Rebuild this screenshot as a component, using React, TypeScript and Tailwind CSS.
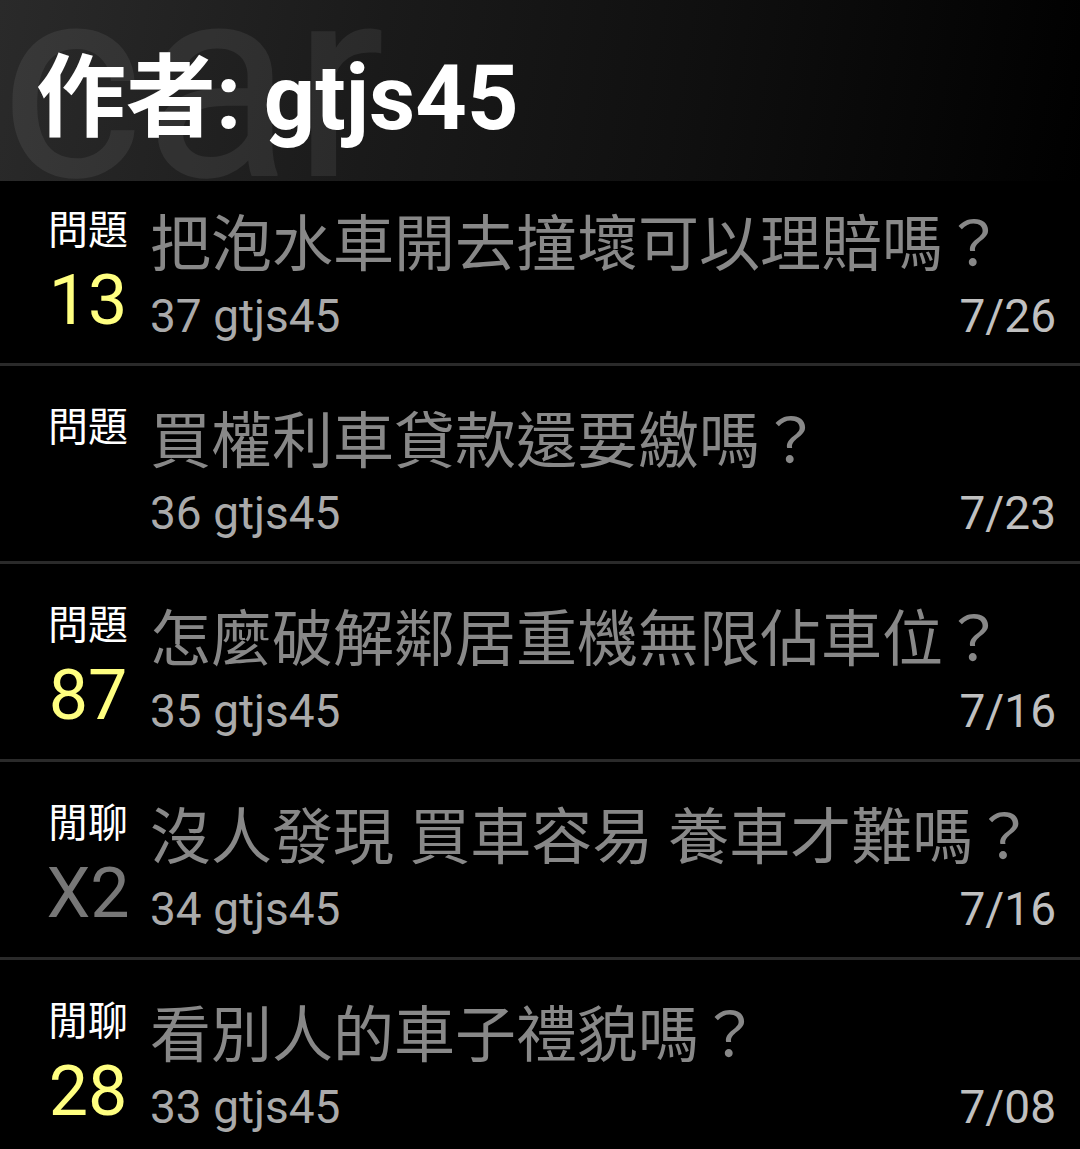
import React from "react";

type Post = {
  kind: string;
  count?: string;
  countGray?: boolean;
  title: string;
  no: string;
  author: string;
  date: string;
};

const POSTS: Post[] = [
  { kind: "問題", count: "13", title: "把泡水車開去撞壞可以理賠嗎？", no: "37", author: "gtjs45", date: "7/26" },
  { kind: "問題", title: "買權利車貸款還要繳嗎？", no: "36", author: "gtjs45", date: "7/23" },
  { kind: "問題", count: "87", title: "怎麼破解鄰居重機無限佔車位？", no: "35", author: "gtjs45", date: "7/16" },
  { kind: "閒聊", count: "X2", countGray: true, title: "沒人發現 買車容易 養車才難嗎？", no: "34", author: "gtjs45", date: "7/16" },
  { kind: "閒聊", count: "28", title: "看別人的車子禮貌嗎？", no: "33", author: "gtjs45", date: "7/08" },
];

const FONT = "font-['Roboto','Noto_Sans_CJK_TC',sans-serif]";

export default function App() {
  return (
    <div lang="zh-Hant" className={`w-[1080px] h-[1149px] bg-black overflow-hidden ${FONT}`}>
      {/* Header */}
      <div className="relative h-[181px] overflow-hidden bg-[linear-gradient(100deg,#2a2a2a_0%,#1a1a1a_35%,#0f0f0f_65%,#000_100%)]">
        <div className="absolute left-[0px] top-[-54px] text-[274px] leading-none text-white/[0.07] select-none">
          car
        </div>
        <div className="relative pl-[36px] pt-[54px] text-[90px] leading-[90px] font-bold text-white">
          作者: gtjs45
        </div>
      </div>

      {/* List */}
      {POSTS.map((p, i) => (
        <div
          key={p.no}
          className={`flex border-b-[3px] border-[#2a2a2a] ${i === 0 ? "h-[185px] pt-[30px]" : "h-[198px] pt-[42px]"}`}
        >
          <div className="w-[100px] ml-[38px] flex flex-col items-center">
            <div className="text-[40px] leading-[40px] text-white">{p.kind}</div>
            {p.count && (
              <div
                className={`mt-[14px] text-[70px] leading-[70px] ${p.countGray ? "text-[#777777]" : "text-[#ffff80]"}`}
              >
                {p.count}
              </div>
            )}
          </div>
          <div className="flex-1 ml-[12px] pt-[4px] pr-[24px] flex flex-col">
            <div className="text-[61px] leading-[61px] text-[#888888] whitespace-nowrap">{p.title}</div>
            <div className="mt-[17px] flex justify-between items-baseline text-[46px] leading-[46px]">
              <span className="text-[#aaaaaa]">
                {p.no} {p.author}
              </span>
              <span className="text-[#c0c0c0]">{p.date}</span>
            </div>
          </div>
        </div>
      ))}
    </div>
  );
}
